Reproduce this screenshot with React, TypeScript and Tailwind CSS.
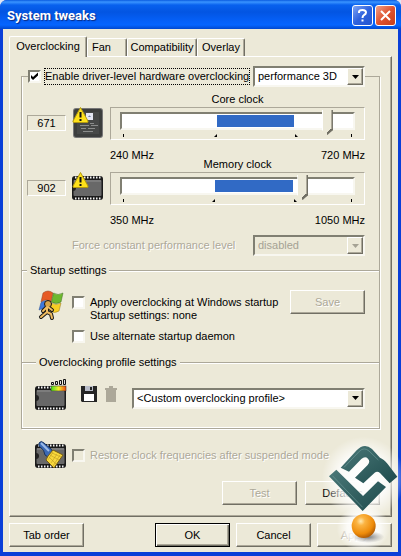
import { useState } from 'react';
import type { ReactNode } from 'react';
import clsx from 'clsx';

interface ClockProps {
  id: string;
  label: string;
  min: number;
  max: number;
  initial: number;
  safeFrom: number;
  safeTo: number;
  icon: ReactNode;
}

const TABS = [
  { name: 'Overclocking', className: 'w-[78px] text-center' },
  { name: 'Fan', className: 'w-[40px] pl-1 text-left' },
  { name: 'Compatibility', className: 'w-[70px] text-center' },
  { name: 'Overlay', className: 'w-[48px] text-center' },
];

function WarningSign() {
  return (
    <g>
      <path d="M8.500 0.500 L16 14 Q16.500 15.500 15 15.500 L2 15.500 Q0.500 15.500 1 14 Z" fill="#ffe21a" stroke="#b39a10" strokeWidth="1" strokeLinejoin="round" />
      <path d="M8.500 5 V10.500" stroke="#111" strokeWidth="2" />
      <rect x="7.500" y="12" width="2" height="2" fill="#111" />
    </g>
  );
}

function ChipBody() {
  return (
    <g>
      <rect x="0" y="4" width="31" height="24" rx="3" fill="#1b1b1b" />
      <path d="M3 5.500 H29 M3 26.500 H29" stroke="#f4f4f4" strokeWidth="2" strokeDasharray="1.500 1.500" />
      <rect x="1.500" y="8" width="28" height="16" rx="1" fill="#686868" />
      <path d="M2 9 H29" stroke="#909090" />
      <path d="M1 13 A3 3 0 0 1 1 19 Z" fill="#222" />
    </g>
  );
}

function GpuIcon() {
  return (
    <svg className="size-8 shrink-0" viewBox="0 0 32 32" aria-hidden="true">
      <rect x="1" y="1" width="30" height="30" rx="3" fill="#777" />
      <rect x="2" y="2" width="28" height="28" rx="2" fill="#3c3e3d" />
      <rect x="5" y="5" width="22" height="22" fill="#464847" />
      <rect x="14" y="6" width="7" height="7" fill="#e4e6f2" />
      <path d="M16 10 Q17.500 7 19 10 Z" fill="#7080a8" />
      <path d="M8 18.500 H17 M18 16.500 H22 M19 18.500 H26 M9 21.500 H14 M16 21.500 H23 M11 24.500 H21" stroke="#8a8c8b" />
      <WarningSign />
    </svg>
  );
}

function MemoryIcon() {
  return (
    <svg className="size-8 shrink-0" viewBox="0 0 32 32" aria-hidden="true">
      <ChipBody />
      <WarningSign />
    </svg>
  );
}

function StartupIcon() {
  return (
    <svg className="size-8 shrink-0" viewBox="0 0 32 32" aria-hidden="true">
      <path d="M8 3 Q13 -1 18 3 L16 12 Q11 8 6 12 Z" fill="#e65a25" stroke="#8f3c22" strokeWidth="0.500" />
      <path d="M18.500 3 Q23 6 28 3 L26 12 Q21 15 16.500 12 Z" fill="#6eb82e" stroke="#3e6f22" strokeWidth="0.500" />
      <path d="M6 12.500 Q11 9 15.500 13 L14 21 Q9 17 4 20 Z" fill="#3d78dc" stroke="#274c91" strokeWidth="0.500" />
      <path d="M16.500 13 Q21 16 26 13 L24 21 Q20 24 14.500 21 Z" fill="#f8ce24" stroke="#92761c" strokeWidth="0.500" />
      <path d="M12 17 L8 21 M13 17 L17 20 M12 18 V22 L6 27 M12 22 L16 24 L17 28" stroke="#171717" strokeWidth="4" fill="none" strokeLinecap="round" strokeLinejoin="round" />
      <circle cx="13" cy="14" r="3.500" fill="#d9a447" stroke="#171717" />
      <path d="M12 17 L8 21 M13 17 L17 20 M12 18 V22 L6 27 M12 22 L16 24 L17 28" stroke="#f0bd61" strokeWidth="2" fill="none" strokeLinecap="round" strokeLinejoin="round" />
    </svg>
  );
}

function ProfileIcon() {
  return (
    <svg className="size-8 shrink-0" viewBox="0 0 32 32" aria-hidden="true">
      <defs>
        <linearGradient id="meter">
          <stop offset="0" stopColor="#43d91c" />
          <stop offset="0.5" stopColor="#f4f12a" />
          <stop offset="1" stopColor="#f04b12" />
        </linearGradient>
      </defs>
      <g transform="translate(0 4)">
        <ChipBody />
      </g>
      <rect x="16" y="8" width="15" height="5" fill="url(#meter)" stroke="#222" strokeWidth="0.500" />
      <path d="M16.500 4.500 h2 v2 h-2 z M20.500 3.500 h2 v3 h-2 z M24.500 2.500 h2 v4 h-2 z M28.500 1.500 h2 v5 h-2 z" fill="#ddd" stroke="#111" />
    </svg>
  );
}

function RestoreIcon() {
  return (
    <svg className="size-8 shrink-0" viewBox="0 0 32 32" aria-hidden="true">
      <ChipBody />
      <path d="M4 3 Q6 0 9 3 L16 9 L18 12 L13 17 L10 15 Q10 10 4 6 Z" fill="#3b69b5" stroke="#19345f" />
      <path d="M6 3 L14 11" stroke="#9dbce8" strokeWidth="2" />
      <path d="M18 10 L28 15 L19 28 L11 20 L13 16 Z" fill="#f8d83c" stroke="#765c12" />
      <path d="M17 13 L26 17 M15 15 L24 20 M14 17 L21 24 M18 12 L13 20 M22 14 L16 23 M25 15 L18 26" stroke="#b78f1c" strokeWidth="0.500" />
    </svg>
  );
}

function SiteMark() {
  return (
    <svg className="pointer-events-none absolute right-0 bottom-1 h-[118px] w-[91px]" viewBox="330 -3 273 354" aria-hidden="true">
      <defs>
        <radialGradient id="haze">
          <stop offset="0" stopColor="#fff" />
          <stop offset="0.600" stopColor="#fff" stopOpacity="0.800" />
          <stop offset="1" stopColor="#fff" stopOpacity="0" />
        </radialGradient>
        <radialGradient id="shade">
          <stop offset="0" stopColor="#444" stopOpacity="0.700" />
          <stop offset="1" stopColor="#666" stopOpacity="0" />
        </radialGradient>
        <radialGradient id="ball" cx="0.380" cy="0.300" r="0.700">
          <stop offset="0" stopColor="#ffe9b0" />
          <stop offset="0.250" stopColor="#fbb443" />
          <stop offset="0.750" stopColor="#ee8b09" />
          <stop offset="1" stopColor="#b55f05" />
        </radialGradient>
        <linearGradient id="teal" x1="0" y1="0" x2="1" y2="1">
          <stop offset="0" stopColor="#4a7878" />
          <stop offset="1" stopColor="#1e4b4c" />
        </linearGradient>
      </defs>
      <ellipse cx="490" cy="130" rx="125" ry="125" fill="url(#haze)" />
      <ellipse cx="490" cy="280" rx="80" ry="70" fill="url(#haze)" />
      <ellipse cx="505" cy="306" rx="48" ry="18" fill="url(#shade)" />
      <path d="M387 124 L409 104 L489 183 L534 139 L558 156 L488 228 Z" fill="url(#teal)" />
      <path d="M422 98 L470 46 Q493 22 516 42 L540 68 Q551 72 563 87 L592 125 L569 145 L540 114 Q532 107 524 113 L490 145 L465 128 L503 90 Q512 79 504 71 Q495 62 484 72 L447 110 Z" fill="url(#teal)" />
      <path d="M432 97 L478 49 Q492 35 507 48 L535 75 M397 122 L488 217" fill="none" stroke="#74a09e" strokeWidth="3" strokeOpacity="0.600" />
      <circle cx="491" cy="273" r="36" fill="url(#ball)" />
    </svg>
  );
}

function CheckBox({ id, checked = false, disabled = false }: { id: string; checked?: boolean; disabled?: boolean }) {
  const [on, setOn] = useState(checked);

  return (
    <span className="grid size-[13px] shrink-0">
      <input
        id={id}
        type="checkbox"
        checked={on}
        disabled={disabled}
        onChange={(e) => setOn(e.target.checked)}
        className="col-start-1 row-start-1 size-[13px] appearance-none border-2 border-t-[#807f72] border-r-[#f8f7f0] border-b-[#f8f7f0] border-l-[#807f72] bg-white disabled:bg-[#ece9d8]"
      />
      {on && (
        <svg className="pointer-events-none col-start-1 row-start-1 size-[13px]" viewBox="0 0 13 13" aria-hidden="true">
          <path d="M3 5 L5 7 L10 2.500 V5.500 L5 10 L3 8 Z" fill="#000" />
        </svg>
      )}
    </span>
  );
}

function Select({ id, label, options, disabled = false, className }: { id: string; label?: string; options: string[]; disabled?: boolean; className: string }) {
  return (
    <span
      className={clsx(
        'grid h-[21px] items-center border-2 border-t-[#807f72] border-r-[#f8f7f0] border-b-[#f8f7f0] border-l-[#807f72]',
        disabled ? 'bg-[#ece9d8]' : 'bg-white',
        className,
      )}
    >
      <select
        id={id}
        aria-label={label}
        disabled={disabled}
        className="col-start-1 row-start-1 h-[17px] w-full appearance-none pl-[3px] leading-[17px] outline-none disabled:text-[#a5a294] disabled:opacity-100"
      >
        {options.map((option) => (
          <option key={option}>{option}</option>
        ))}
      </select>
      <span className="pointer-events-none col-start-1 row-start-1 flex h-[17px] w-4 items-center justify-center justify-self-end border border-t-white border-r-[#716f64] border-b-[#716f64] border-l-white bg-[#ece9d8] shadow-[inset_-1px_-1px_0_#aca899]">
        <svg className="h-1 w-[7px]" viewBox="0 0 7 4" aria-hidden="true">
          <path d="M0 0 H7 L3.500 4 Z" fill={disabled ? '#a5a294' : '#000'} />
        </svg>
      </span>
    </span>
  );
}

function Button({ children, disabled = false, primary = false }: { children: ReactNode; disabled?: boolean; primary?: boolean }) {
  return (
    <button
      disabled={disabled}
      className={clsx(
        'h-6 w-[75px] shrink-0 border text-center leading-[20px] disabled:text-[#aca899] disabled:[text-shadow:1px_1px_0_#fff]',
        primary
          ? 'border-black shadow-[inset_1px_1px_0_#fff,inset_-1px_-1px_0_#716f64,inset_-2px_-2px_0_#aca899]'
          : 'border-t-white border-r-[#716f64] border-b-[#716f64] border-l-white shadow-[inset_-1px_-1px_0_#aca899]',
      )}
    >
      {children}
    </button>
  );
}

function GroupTitle({ children, indent }: { children: ReactNode; indent: string }) {
  return (
    <div className="flex items-center">
      <span className={clsx('h-[2px] border-t border-[#aca899] bg-white', indent)} />
      <h2 className="px-[3px]">{children}</h2>
      <span className="h-[2px] grow border-t border-[#aca899] bg-white" />
    </div>
  );
}

function Clock({ id, label, min, max, initial, safeFrom, safeTo, icon }: ClockProps) {
  const [value, setValue] = useState(initial);
  const percent = (n: number) => `${((n - min) / (max - min)) * 100}%`;

  return (
    <div className="flex gap-[6px] pr-[14px] pl-[5px]">
      <output htmlFor={id} className="mt-[22px] h-4 w-[39px] border border-t-[#aca899] border-r-white border-b-white border-l-[#aca899] text-center leading-[14px]">
        {value}
      </output>
      <div className="mt-[14px]">{icon}</div>
      <div className="-mb-1 grow">
        <label htmlFor={id} className="block h-[14px] text-center">{label}</label>
        <div className="relative h-[33px] border border-t-[#aca899] border-r-white border-b-white border-l-[#aca899] px-[9px] pt-1">
          <div className="h-[18px] border-2 border-t-[#807f72] border-r-[#f8f7f0] border-b-[#f8f7f0] border-l-[#807f72] bg-white px-[3px] py-px">
            <div className="h-3">
              <div
                className="h-3 bg-[#316ac5]"
                style={{ marginLeft: percent(safeFrom), width: `${((safeTo - safeFrom) / (max - min)) * 100}%` }}
              />
            </div>
          </div>
          {/* Scale marks under the groove */}
          <div className="mx-[3px] mt-1 grid h-[3px]">
            <span className="col-start-1 row-start-1 h-[3px] w-px bg-black" />
            <span className="col-start-1 row-start-1 h-[3px] w-px justify-self-end bg-black" />
            <span
              className="col-start-1 row-start-1 flex h-[3px] justify-between"
              style={{ marginLeft: percent(safeFrom), width: `${((safeTo - safeFrom) / (max - min)) * 100}%` }}
            >
              <svg className="-ml-[3px] size-[3px]" viewBox="0 0 3 3"><path d="M3 0 V3 H0 Z" /></svg>
              <svg className="-mr-[3px] size-[3px]" viewBox="0 0 3 3"><path d="M0 0 V3 H3 Z" /></svg>
            </span>
          </div>
          <input
            id={id}
            type="range"
            min={min}
            max={max}
            value={value}
            onChange={(e) => setValue(Number(e.target.value))}
            className="absolute inset-x-[8px] top-[2px] h-[25px] w-[calc(100%-16px)] appearance-none bg-transparent [&::-webkit-slider-thumb]:h-[25px] [&::-webkit-slider-thumb]:w-[11px] [&::-webkit-slider-thumb]:appearance-none [&::-webkit-slider-thumb]:bg-[linear-gradient(to_bottom_right,transparent_32%,#716f64_33%),linear-gradient(90deg,#fff_0_1px,#ece9d8_1px_9px,#aca899_9px_10px,#716f64_10px)] [&::-webkit-slider-thumb]:[background-size:6px_6px,100%_100%] [&::-webkit-slider-thumb]:bg-no-repeat [&::-webkit-slider-thumb]:[background-position:100%_100%,0_0] [&::-webkit-slider-thumb]:[clip-path:polygon(0_0,100%_0,100%_80%,50%_100%,0_80%)]"
          />
        </div>
        <div className="flex justify-between pt-[9px]">
          <span>{min} MHz</span>
          <span>{max} MHz</span>
        </div>
      </div>
    </div>
  );
}

export default function App() {
  return (
    <div className="bg-[#dfe6f5]">
      <main className="relative overflow-hidden rounded-t-[7px] bg-[#0a3fd8] px-[3px] pb-1 font-['Liberation_Sans',Arial,sans-serif] text-[11px] leading-[13px] text-black">
        <header className="-mx-[3px] flex h-[29px] items-center gap-[2px] bg-[linear-gradient(180deg,#0a5be0_0,#3a94ff_2px,#0861ee_5px,#0355e2_12px,#0560f8_21px,#0565ff_25px,#0148cf_29px)] pt-[2px] pr-[5px] pl-[7px]">
          <h1 className="grow font-[Roboto,sans-serif] text-[13px] font-bold text-white [text-shadow:1px_1px_1px_#0a2a80]">System tweaks</h1>
          <button aria-label="Help" className="flex size-[21px] items-center justify-center rounded-[3px] border border-white bg-[linear-gradient(135deg,#7fa5f5,#2f62dd_50%,#2455d0)]">
            <svg className="size-[17px]" viewBox="0 0 17 17" fill="none" stroke="#fff" strokeWidth="2" aria-hidden="true">
              <path d="M5 6 V5 Q5 3 8.500 3 Q12 3 12 5.500 Q12 7 10 8 Q8.500 9 8.500 11" />
              <path d="M8.500 12.500 V14.500" />
            </svg>
          </button>
          <button aria-label="Close" className="flex size-[21px] items-center justify-center rounded-[3px] border border-white bg-[linear-gradient(135deg,#f0a088,#df5330_50%,#c83e18)]">
            <svg className="size-[17px]" viewBox="0 0 17 17" stroke="#fff" strokeWidth="2" aria-hidden="true">
              <path d="M4 4 L13 13 M13 4 L4 13" />
            </svg>
          </button>
        </header>

        <div className="bg-[#ece9d8] px-[6px] pt-[7px] pb-[5px]">
          <div role="tablist" className="flex items-end">
            {TABS.map((tab, index) => (
              <button
                key={tab.name}
                role="tab"
                aria-selected={index === 0}
                className={clsx(
                  'rounded-t-[2px] border border-b-0 border-t-white border-r-[#716f64] border-l-white shadow-[inset_-1px_0_0_#aca899]',
                  tab.className,
                  index === 0 ? 'relative -mb-px h-[21px] bg-[#ece9d8] pb-[2px]' : 'h-[18px]',
                )}
              >
                {tab.name}
              </button>
            ))}
          </div>

          <section className="border border-t-white border-r-[#716f64] border-b-[#716f64] border-l-white px-[11px] pt-[9px] pb-[11px] shadow-[inset_-1px_-1px_0_#aca899]">
            <fieldset className="min-w-0 border border-[#aca899] pb-[18px] shadow-[inset_1px_0_0_#fff,inset_0_-1px_0_#fff,1px_1px_0_#fff]">
              <legend className="ml-[6px] flex h-[21px] w-[calc(100%-20px)] items-center bg-[#ece9d8]">
                <CheckBox id="enable" checked />
                <label htmlFor="enable" className="ml-[3px] border border-dotted border-black leading-[15px] whitespace-nowrap">
                  Enable driver-level hardware overclocking
                </label>
                <span className="grow" />
                <Select id="profile-mode" label="Clock mode" options={['performance 3D', 'standard 2D']} className="w-[112px] shrink-0" />
              </legend>

              <div className="pt-[6px]">
                <Clock id="core" label="Core clock" min={240} max={720} initial={671} safeFrom={437} safeTo={600} icon={<GpuIcon />} />
                <Clock id="memory" label="Memory clock" min={350} max={1050} initial={902} safeFrom={630} safeTo={874} icon={<MemoryIcon />} />
              </div>

              <div className="mt-3 flex items-center justify-between pr-[14px] pl-[50px]">
                <label htmlFor="level" className="text-[#aca899] [text-shadow:1px_1px_0_#fff]">Force constant performance level</label>
                <Select id="level" options={['disabled']} disabled className="w-[112px]" />
              </div>

              <div className="mt-2">
                <GroupTitle indent="w-[5px]">Startup settings</GroupTitle>
              </div>
              <div className="mt-[13px] flex pr-[14px] pl-[13px]">
                <StartupIcon />
                <div className="ml-[5px] flex grow flex-col gap-2 pt-[6px]">
                  <div className="flex gap-[5px]">
                    <CheckBox id="startup" />
                    <label htmlFor="startup">
                      Apply overclocking at Windows startup
                      <br />
                      Startup settings: none
                    </label>
                  </div>
                  <div className="flex gap-[5px]">
                    <CheckBox id="daemon" />
                    <label htmlFor="daemon">Use alternate startup daemon</label>
                  </div>
                </div>
                <Button disabled>Save</Button>
              </div>

              <div className="mt-[13px]">
                <GroupTitle indent="w-[14px]">Overclocking profile settings</GroupTitle>
              </div>
              <div className="mt-[9px] flex items-center pr-[14px] pl-[13px]">
                <ProfileIcon />
                <button aria-label="Save profile" className="ml-[14px]">
                  <svg className="size-4" viewBox="0 0 16 16" aria-hidden="true">
                    <path d="M0 0 H16 V16 H1 L0 15 Z" fill="#252525" />
                    <rect x="4" y="0" width="8" height="5" fill="#b8bcc8" />
                    <rect x="9" y="1" width="2" height="3" fill="#252525" />
                    <rect x="3" y="8" width="10" height="7" fill="#fff" />
                  </svg>
                </button>
                <button aria-label="Delete profile" disabled className="ml-2">
                  <svg className="h-4 w-3" viewBox="0 0 12 16" fill="#aca899" aria-hidden="true">
                    <path d="M0 2 H4 V0 H8 V2 H12 V4 H0 Z M1 4 H11 V16 H1 Z" />
                  </svg>
                </button>
                <Select id="profile" label="Overclocking profile" options={['<Custom overclocking profile>']} className="mt-2 ml-[15px] grow" />
              </div>
            </fieldset>

            <div className="mt-[11px] flex items-start pl-[14px]">
              <RestoreIcon />
              <div className="ml-[5px] flex gap-[5px] pt-[9px]">
                <CheckBox id="restore" disabled />
                <label htmlFor="restore" className="text-[#aca899] [text-shadow:1px_1px_0_#fff]">Restore clock frequencies after suspended mode</label>
              </div>
            </div>

            <div className="mt-[9px] flex justify-end gap-2">
              <Button disabled>Test</Button>
              <Button>Defaults</Button>
            </div>
          </section>

          <footer className="mt-[6px] flex gap-[6px]">
            <Button>Tab order</Button>
            <span className="grow" />
            <Button primary>OK</Button>
            <Button>Cancel</Button>
            <Button disabled>Apply</Button>
          </footer>
        </div>
        <SiteMark />
      </main>
    </div>
  );
}
